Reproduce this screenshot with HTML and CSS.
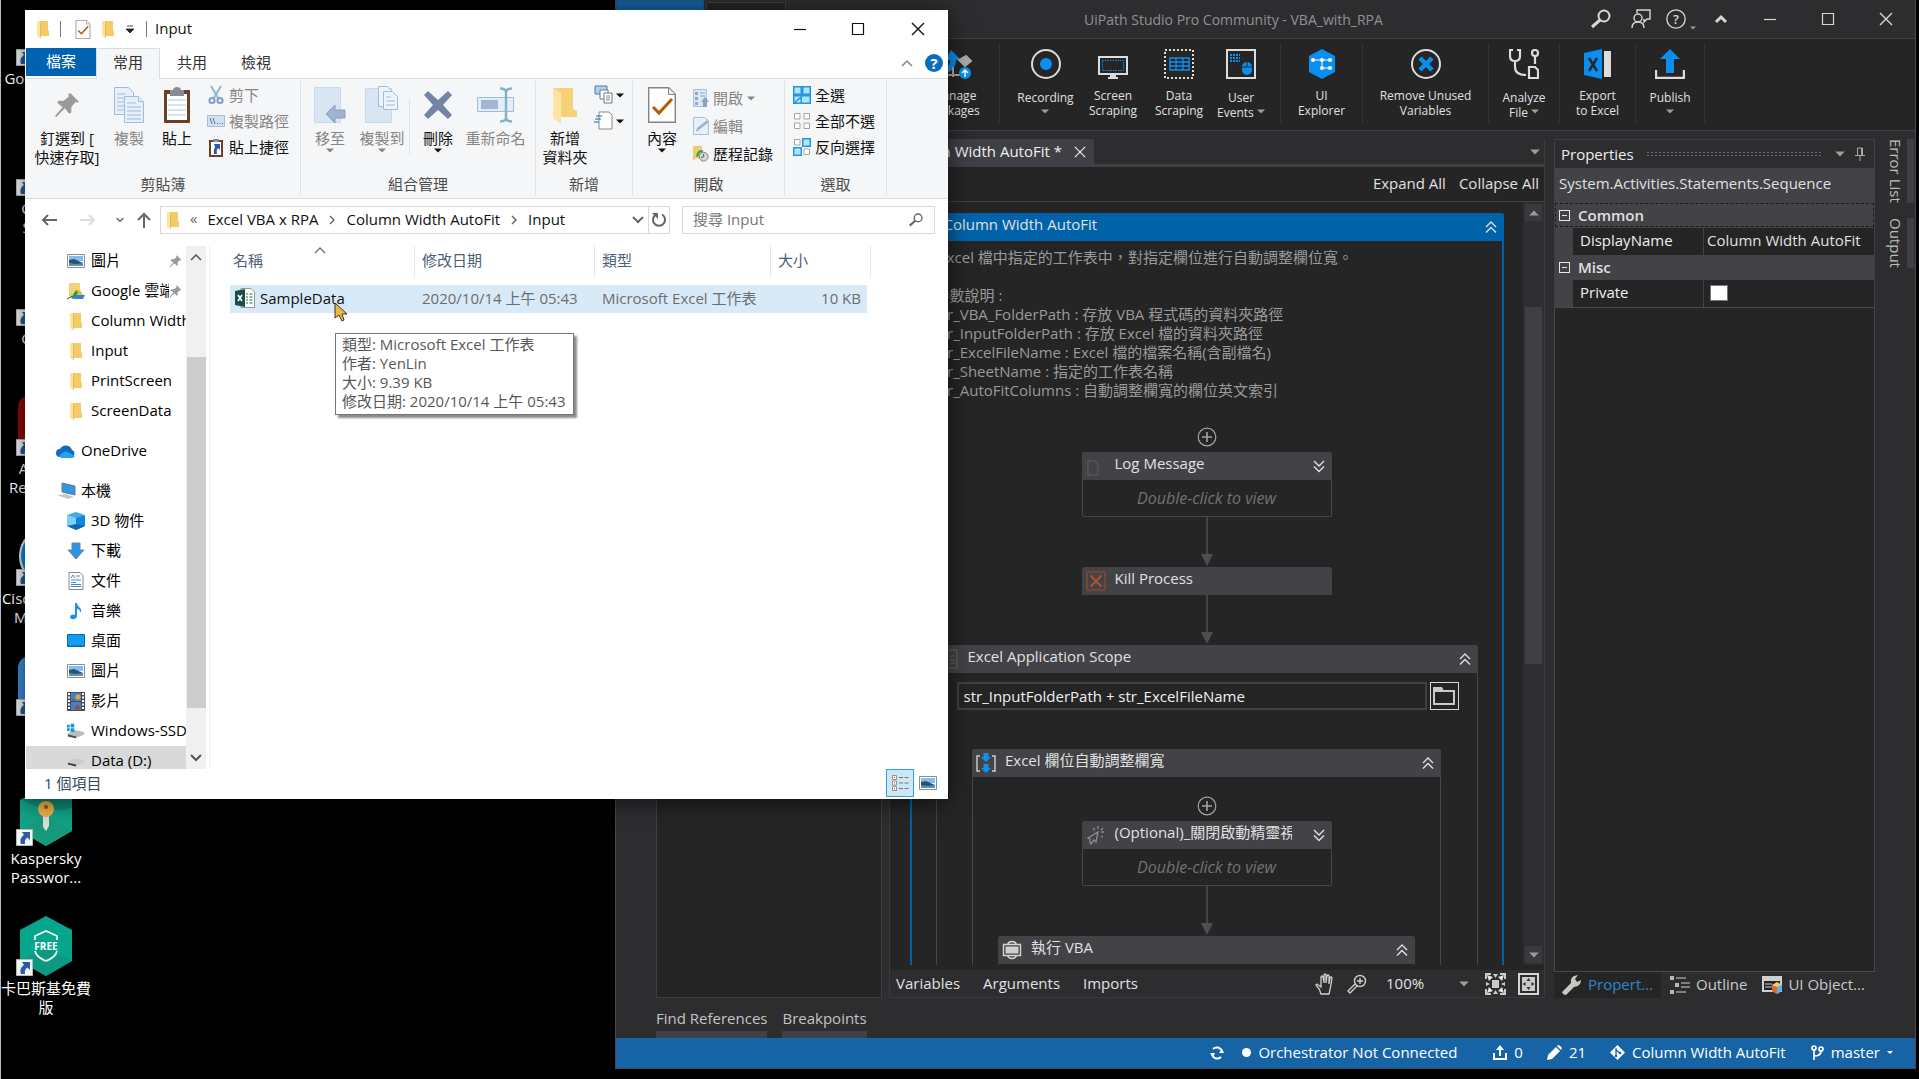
FILE: index.html
```html
<!DOCTYPE html>
<html lang="zh-Hant">
<head>
<meta charset="utf-8">
<title>Input</title>
<link rel="stylesheet" href="styles.css">
</head>
<body>
<svg class="sprite" aria-hidden="true">
  <symbol id="folder" viewBox="0 0 14 18"><path d="M1 1h5v14l-2 3-3-2z" fill="#fbe3a0"/><path d="M4 1h8v9l1 1v5H5l-1 2z" fill="#f4cb68"/><path d="M4 1v17l1-2V4z" fill="#e9b94f"/></symbol>
  <symbol id="pin" viewBox="0 0 24 24"><path d="M15 1l8 8-2 1-1-1-4 5v5l-2 1-4-5-8 8-1-1 7-8-5-4 1-2h5l5-4-1-2z" fill="#9a9a9a"/></symbol>
  <symbol id="checkdoc" viewBox="0 0 28 36"><path d="M.7.7h20l6.600 6.600v28H.7z" fill="#fff" stroke="#848484" stroke-width="1.400"/><path d="M20.500 1v6.500H27" fill="#eee" stroke="#848484"/><path d="M5 20l6 6 13-14" fill="none" stroke="#b35d08" stroke-width="3"/></symbol>
  <symbol id="copy" viewBox="0 0 30 36"><g fill="#e7f0fa" stroke="#9fbcdc"><path d="M.5.5h14l5 5v22H.5z"/><path d="M3 7h9M3 11h13M3 15h13M3 19h13M3 23h13"/><path d="M10.500 9.500h14l5 5v21h-19z"/><path d="M24.500 9.500v5h5M13 16h9M13 20h14M13 24h14M13 28h14M13 32h14"/></g></symbol>
  <symbol id="paste" viewBox="0 0 28 38"><rect x="1" y="4" width="26" height="33" rx="1" fill="#6b4022"/><path d="M4 8h20v26H4z" fill="#fff"/><path d="M5 14h18M5 19h18M5 24h18M5 29h18" stroke="#a9cbe0" stroke-width="1.200"/><path d="M7 4h3c0-4 8-4 8 0h3v6H7z" fill="#858c93"/></symbol>
  <symbol id="scissors" viewBox="0 0 16 20"><path d="M3 1l7 12M13 1L6 13" stroke="#9bb2cd" stroke-width="2" fill="none"/><circle cx="4" cy="15.500" r="2.600" fill="none" stroke="#7f9fc8" stroke-width="2"/><circle cx="12" cy="15.500" r="2.600" fill="none" stroke="#7f9fc8" stroke-width="2"/></symbol>
  <symbol id="copypath" viewBox="0 0 18 12"><path d="M.5.5h17v11H.5z" fill="#d4e1f2" stroke="#a6bcd8"/><path d="M3 3l2 6M6 3l2 6M10 8.500h1M12.500 8.500h1M15 8.500h1" stroke="#54719c" fill="none"/></symbol>
  <symbol id="arrowbadge" viewBox="0 0 17 17"><path d="M.5.5h16v16H.5z" fill="#f4f6f8" stroke="#b8b8b8"/><path d="M6 3h8v8l-2.500-2.500C9 10 8.500 12 9 15H5c-1.500-4 0-7 3-9z" fill="#2a5da4"/></symbol>
  <symbol id="move" viewBox="0 0 32 38"><path d="M.5 1.500h26v35H.5z" fill="#d8e6f4" stroke="#c8daee"/><path d="M31 24v8H21v5l-9-9 9-9v5z" fill="#9fb4cd" stroke="#89a1bf"/></symbol>
  <symbol id="copyto" viewBox="0 0 34 38"><path d="M.5 2.500h26v34H.5z" fill="#d8e6f4" stroke="#c8daee"/><g fill="#edf4fc" stroke="#9fbcdc"><path d="M13.500.5h9l4 4v16h-13z"/><path d="M18.500 5.500h9l5 5v13h-14zM21 11h5M21 15h9M21 19h9"/></g></symbol>
  <symbol id="delete" viewBox="0 0 32 32"><path d="M2 6l4-4 10 9L26 2l4 4-9 10 9 10-4 4-10-9-10 9-4-4 9-10z" fill="#7285a6"/></symbol>
  <symbol id="rename" viewBox="0 0 38 36"><path d="M.5 10.500h36v14H.500z" fill="#e3edf8" stroke="#9fbcdc"/><path d="M4 13h17v9H4z" fill="#a3b5d0"/><path d="M23 1.500q6 0 6 4v25q0 4-6 4M35 1.500q-6 0-6 4v25q0 4 6 4" fill="none" stroke="#84b1cb" stroke-width="2.400"/></symbol>
  <symbol id="bigfolder" viewBox="0 0 24 36"><path d="M0 1h20v21l4 2v6H8v6l-8-5z" fill="#f6d177"/><path d="M0 1l8 5v30l-8-5z" fill="#fce4a4"/></symbol>
  <symbol id="newitem" viewBox="0 0 20 20"><path d="M1 1h12v8H1z" fill="#a7d7f5" stroke="#4c7da5"/><path d="M6 5h8v9H6z" fill="#fff" stroke="#777"/><path d="M10 8h8v10h-8z" fill="#fff" stroke="#777"/><path d="M12 11h4M12 13h4M12 15h4" stroke="#5aa2a2"/></symbol>
  <symbol id="easy" viewBox="0 0 20 20"><path d="M5 1h10l3 3v14H5z" fill="#fff" stroke="#888"/><path d="M2 5h6M1 8h6M0 11h5" stroke="#1b67b0"/></symbol>
  <symbol id="openicon" viewBox="0 0 16 18"><path d="M.5.5h13v17H.5z" fill="#dce9f5" stroke="#a8c0da"/><path d="M2 3h3v3H2zM2 8h3v3H2zM2 13h3v3H2z" fill="#8fa8c8"/><path d="M7 4h5M7 7h5" stroke="#8fa8c8"/><path d="M12 8l4 5h-2v5h-4v-5H8z" fill="#8ba3c3"/></symbol>
  <symbol id="edit" viewBox="0 0 16 18"><path d="M.5.500h11l4 3v14H.5z" fill="#e7f0fa" stroke="#a8c0da"/><path d="M3 15l1-4 10-8 2 2-10 8z" fill="#9fb4d0"/></symbol>
  <symbol id="history" viewBox="0 0 18 18"><path d="M0 0h10v14H3l-3 3z" fill="#f4cb68"/><path d="M5 12a5 5 0 0 1 6-6" stroke="#2f9d6b" stroke-width="2.500" fill="none"/><circle cx="12" cy="12" r="5" fill="#d7d7d7" stroke="#777"/><path d="M12 9v3l-3 1" stroke="#444" fill="none"/></symbol>
  <symbol id="selall" viewBox="0 0 18 18"><path d="M.75.75h7.500v7.500H.75zM9.750.75h7.500v7.500h-7.500zM.75 9.750h7.500v7.500H.75zM9.750 9.750h7.500v7.500H.75z" fill="#b3e2fd" stroke="#2496e0" stroke-width="1.500"/></symbol>
  <symbol id="selnone" viewBox="0 0 18 18"><path d="M1.500 1.500h5.500V7H1.500zM11 1.500h5.500V7H11zM1.500 11H7v5.500H1.500zM11 11h5.500v5.500H11z" fill="#fff" stroke="#a5a5a5"/></symbol>
  <symbol id="selinv" viewBox="0 0 18 18"><path d="M1.500 1.500h5.500V7H1.500zM11 11h5.500v5.500H11z" fill="#fff" stroke="#a5a5a5"/><path d="M9.750.75h7.500v7.500h-7.500zM.75 9.750h7.500v7.500H.75z" fill="#b3e2fd" stroke="#2496e0" stroke-width="1.500"/></symbol>
  <symbol id="caret" viewBox="0 0 8 5"><path d="M0 .5h8l-4 4z" fill="currentColor"/></symbol>
  <symbol id="up" viewBox="0 0 12 8"><path d="M1 7l5-5 5 5" fill="none" stroke="currentColor" stroke-width="1.500"/></symbol>
  <symbol id="down" viewBox="0 0 12 8"><path d="M1 1l5 5 5-5" fill="none" stroke="currentColor" stroke-width="2"/></symbol>
  <symbol id="right" viewBox="0 0 6 10"><path d="M1 1l4 4-4 4" fill="none" stroke="currentColor" stroke-width="1.500"/></symbol>
  <symbol id="larrow" viewBox="0 0 16 12"><path d="M7 1L2 6l5 5M2 6h14" fill="none" stroke="currentColor" stroke-width="2"/></symbol>
  <symbol id="min" viewBox="0 0 14 14"><path d="M1 7.500h12" stroke="currentColor" stroke-width="1.200"/></symbol>
  <symbol id="max" viewBox="0 0 14 14"><path d="M1.500 1.500h11v11h-11z" fill="none" stroke="currentColor" stroke-width="1.200"/></symbol>
  <symbol id="close" viewBox="0 0 14 14"><path d="M1 1l12 12M13 1L1 13" stroke="currentColor" stroke-width="1.400"/></symbol>
  <symbol id="lens" viewBox="0 0 20 20"><circle cx="13" cy="7" r="5.500" fill="none" stroke="currentColor" stroke-width="2"/><path d="M9 11l-8 7" stroke="currentColor" stroke-width="3"/></symbol>
  <symbol id="refresh" viewBox="0 0 16 16"><path d="M11 2.500A6 6 0 1 1 5 2.500" fill="none" stroke="currentColor" stroke-width="2"/><path d="M1 1h6v6z" fill="currentColor"/></symbol>
  <symbol id="picture" viewBox="0 0 18 14"><path d="M.5.500h17v13H.5z" fill="#fff" stroke="#8e8e8e"/><path d="M2 2h14v5H2z" fill="#7cc0f3"/><path d="M2 6l5-1 9 4v1H2z" fill="#34505f"/><path d="M2 9l7 1 7-1v3H2z" fill="#4f94c4"/></symbol>
  <symbol id="gdrive" viewBox="0 0 18 18"><path d="M2 1h11v13H2z" fill="#f6d177"/><path d="M9 8h4l4 7h-4z" fill="#f5b921"/><path d="M9 8l2 3-4 6-3-1z" fill="#1c9c5b"/><path d="M7 17l2-4h9l-2 4z" fill="#3c7be0"/><path d="M0 17l5-3" stroke="#444"/></symbol>
  <symbol id="cloud" viewBox="0 0 20 14"><path d="M4 13a4 4 0 0 1 0-8 6.500 6.500 0 0 1 12 1 3.700 3.700 0 0 1 0 7z" fill="#0f6cbd"/><path d="M3 12q5-6 9-4l7 4q-1 2-3 2H5z" fill="#28a0ec"/></symbol>
  <symbol id="pc" viewBox="0 0 20 18"><path d="M6 1l13 3v9L6 10z" fill="#2f97e3" stroke="#6b7a88"/><path d="M1 13l9-1 8 3-6 2z" fill="#c3c8cc"/></symbol>
  <symbol id="cube" viewBox="0 0 18 18"><path d="M0 3l9 2v13l-9-4z" fill="#7fd0f4"/><path d="M18 3L9 5v13l9-4z" fill="#0c88d6"/><path d="M0 3l9-3 9 3-9 3z" fill="#44a8e6"/><path d="M0 14l9-2 9 2-9 4z" fill="#1166b0"/></symbol>
  <symbol id="download" viewBox="0 0 18 18"><path d="M5 1h8v7h4l-8 9-8-9h4z" fill="#2b95e6" stroke="#6f8398"/></symbol>
  <symbol id="document" viewBox="0 0 16 18"><path d="M1 .5h11l3 3v14H1z" fill="#fff" stroke="#808a92"/><path d="M3 6l2-3 2 3M8 4h4M3 8h10M3 10.500h5M3 12.500h10M3 14.500h10" stroke="#3f8dc0" fill="none"/></symbol>
  <symbol id="music" viewBox="0 0 14 18"><path d="M6 1h2c0 4 5 4 4 9h-1c0-2-1-3-3-3v7c0 4-7 4-7 1 0-2 3-3 5-2z" fill="#1795ea"/></symbol>
  <symbol id="desk" viewBox="0 0 18 14"><path d="M.5.5h17v12H.500z" fill="#159bf0" stroke="#0c6cae"/><path d="M1 12h16" stroke="#0a4c80" stroke-dasharray="2 1"/></symbol>
  <symbol id="video" viewBox="0 0 18 19"><path d="M0 0h18v19H0z" fill="#4a4a4a"/><path d="M2 1v17M16 1v17" stroke="#fff" stroke-width="2" stroke-dasharray="2 1.500"/><path d="M4 1h10v8H4zM4 10h10v8H4z" fill="#3c84cf"/><circle cx="11" cy="5" r="2.500" fill="#e8a92b"/><path d="M7 17l4-5 2 5zM5 7l4 1-4 1z" fill="#c33a24"/></symbol>
  <symbol id="windisk" viewBox="0 0 20 16"><path d="M1 11l7-4 11 2v3l-9 4-9-3z" fill="#b9bdc0"/><path d="M1 12l9 2v2l-9-2z" fill="#444"/><path d="M0 1h3v3H0zM4 0h4v4H4zM0 5h3v3H0zM4 5h4v4H4z" fill="#1197ea"/></symbol>
  <symbol id="disk" viewBox="0 0 20 16"><path d="M1 9l8-4 10 2v3l-9 4-9-3z" fill="#c9cdd0"/><path d="M1 10l9 2v2l-9-2z" fill="#3c3c3c"/></symbol>
  <symbol id="excel" viewBox="0 0 20 20"><path d="M6 .5h10l3.500 3.500v15.500H6z" fill="#fff" stroke="#8e9a94"/><path d="M11 6h2M14.500 6h3M11 9h2M14.500 9h3M11 12h2M14.500 12h3M11 15h2M14.500 15h3" stroke="#6aa186" stroke-width="1.500"/><path d="M0 3l10-2v18L0 17z" fill="#1a4f3f"/><path d="M3 7l4 6M7 7l-4 6" stroke="#fff" stroke-width="1.600"/></symbol>
  <symbol id="details" viewBox="0 0 18 18"><g fill="#fff" stroke="#9a8f80"><path d="M1.500 1.500h4v4h-4zM1.500 7h4v4h-4zM1.500 12.500h4v4h-4z"/></g><path d="M8 3.500h4M13.500 3.500h4M8 9h4M13.500 9h4M8 14.500h4M13.500 14.500h4" stroke="#777"/><path d="M3 3h1v1H3zM3 8.500h1v1H3zM3 14h1v1H3z" fill="#b33"/></symbol>
  <symbol id="dblup" viewBox="0 0 12 14"><path d="M1 7l5-5 5 5M1 12.500l5-5 5 5" fill="none" stroke="currentColor" stroke-width="1.400"/></symbol>
  <symbol id="dbldown" viewBox="0 0 12 14"><path d="M1 2l5 5 5-5M1 7.500l5 5 5-5" fill="none" stroke="currentColor" stroke-width="1.400"/></symbol>
  <symbol id="plus" viewBox="0 0 20 20"><circle cx="10" cy="10" r="8.800" fill="none" stroke="#a3a3a3" stroke-width="1.200"/><path d="M10 5v10M5 10h10" stroke="#a3a3a3" stroke-width="1.600"/></symbol>
  <symbol id="flow" viewBox="0 0 12 50"><path d="M6 0v38" stroke="#434347" stroke-width="2"/><path d="M0 37h12L6 49z" fill="#4d4d52"/></symbol>
</svg>

<main class="desktop">
  <ul class="shortcuts">
    <li><span class="art"><svg class="badge"><use href="#arrowbadge"/></svg></span><span>Google 雲端</span></li>
    <li><span class="art"><svg class="badge"><use href="#arrowbadge"/></svg></span><span>Google<br>Sheets</span></li>
    <li><span class="art"><svg class="badge"><use href="#arrowbadge"/></svg></span><span>Google<br>Docs</span></li>
    <li><span class="art"><svg viewBox="0 0 60 60"><rect x="2" width="56" height="60" rx="10" fill="#8f0b04"/></svg><svg class="badge"><use href="#arrowbadge"/></svg></span><span>Acrobat<br>Reader DC</span></li>
    <li><span class="art"><svg viewBox="0 0 60 60"><circle cx="32" cy="30" r="28" fill="#0d8fdc" stroke="#e8f4fa" stroke-width="2"/></svg><svg class="badge"><use href="#arrowbadge"/></svg></span><span>Cisco Webex<br>Meetings</span></li>
    <li><span class="art"><svg viewBox="0 0 60 60"><rect x="2" width="56" height="60" rx="12" fill="#3f8ce0"/></svg><svg class="badge"><use href="#arrowbadge"/></svg></span><span>Zoom</span></li>
    <li><span class="art"><svg viewBox="0 0 60 60"><path d="M30 0l26 14v31L30 60 4 45V14z" fill="#12a287"/><path d="M4 45l26-14 26 14-26 15z" fill="#189a7c"/><path d="M4 13h52v9q-26 7-52-9z" fill="#0c8e76"/><path d="M27 29h6v11l-3 5-3-4z" fill="#ddd"/><circle cx="30" cy="23" r="8" fill="#f0b04c"/><circle cx="30" cy="21" r="2" fill="#8a5a12"/></svg><svg class="badge"><use href="#arrowbadge"/></svg></span><span>Kaspersky<br>Passwor...</span></li>
    <li><span class="art"><svg viewBox="0 0 60 60"><path d="M30 0l26 14v31L30 60 4 45V14z" fill="#05a68c"/><path d="M4 45l26-14 26 14-26 15z" fill="#0b9a7f"/><path d="M19 24v-4l11-5 11 5v4M19 35q1 6 11 10 10-4 11-10" fill="none" stroke="#fff" stroke-width="1.600"/><text x="30" y="34" text-anchor="middle" class="free">FREE</text></svg><svg class="badge"><use href="#arrowbadge"/></svg></span><span>卡巴斯基免費<br>版</span></li>
  </ul>

  <section class="studio" aria-label="UiPath Studio">
    <header class="studio-title">
      <span class="rtab active"></span><span class="rtab"></span>
      <h1>UiPath Studio Pro Community - VBA_with_RPA</h1>
      <button class="tool" aria-label="Search"><svg width="20" height="20"><use href="#lens"/></svg></button>
      <button class="tool" aria-label="Feedback"><svg width="20" height="20" viewBox="0 0 20 20"><path d="M6 4V1h13v9h-3l-3 3v-3M1 19q0-6 6-6t6 6" fill="none" stroke="currentColor" stroke-width="1.400"/><circle cx="7" cy="9" r="4" fill="none" stroke="currentColor" stroke-width="1.400"/></svg></button>
      <button class="tool help" aria-label="Help"><svg width="20" height="20" viewBox="0 0 20 20"><circle cx="10" cy="10" r="9.200" fill="none" stroke="currentColor" stroke-width="1.300"/><text x="10" y="15" text-anchor="middle" class="qmark">?</text></svg><svg class="grey low" width="6" height="4"><use href="#caret"/></svg></button>
      <button class="tool" aria-label="Collapse ribbon"><svg width="14" height="10" viewBox="0 0 14 10"><path d="M2 8l5-5 5 5" fill="none" stroke="currentColor" stroke-width="3"/></svg></button>
      <button class="win" aria-label="Minimize"><svg width="14" height="14"><use href="#min"/></svg></button>
      <button class="win" aria-label="Maximize"><svg width="14" height="14"><use href="#max"/></svg></button>
      <button class="win" aria-label="Close"><svg width="14" height="14"><use href="#close"/></svg></button>
    </header>

    <nav class="studio-ribbon">
      <div class="sg packages"><button><svg width="46" height="30" viewBox="4 0 46 30"><path d="M24 1l10 10h-5q0 8-7 12l-4-3q5-3 5-9h-5z" fill="#0a8ff0"/><path d="M32 11l7-4 5 5-6 5zM10 26h24M26 18v10" stroke="#aaa" stroke-width="2" fill="#aaa"/><circle cx="38" cy="24" r="6" fill="#0a8ff0"/><path d="M38 28v-7M35 24l3-3 3 3" stroke="#fff" stroke-width="1.500" fill="none"/></svg><span>Manage<br>Packages</span></button></div>
      <div class="sg capture">
        <button><svg width="30" height="30" viewBox="0 0 30 30"><circle cx="15" cy="15" r="14" fill="none" stroke="#dcdcdc" stroke-width="2"/><circle cx="15" cy="15" r="6" fill="#0a8ff0"/></svg><span class="dd">Recording<br><svg class="grey" width="8" height="5"><use href="#caret"/></svg></span></button>
        <button><svg width="30" height="30" viewBox="0 0 30 30"><path d="M1 8h28v17H1z" fill="none" stroke="#dcdcdc" stroke-width="2"/><path d="M12 26h6v2h2v2H10v-2h2z" fill="#dcdcdc"/><path d="M4.500 11.500h21v10h-21z" fill="none" stroke="#0a8ff0" stroke-dasharray="1.500 1"/></svg><span>Screen<br>Scraping</span></button>
        <button><svg width="30" height="30" viewBox="0 0 30 30"><path d="M1 1h28v28H1z" fill="none" stroke="#dcdcdc" stroke-width="2" stroke-dasharray="2 2"/><path d="M6 9h19v12H6zM6 13h19M6 17h19M12 9v12M19 9v12" fill="none" stroke="#0a8ff0" stroke-width="1.500"/></svg><span>Data<br>Scraping</span></button>
        <button><svg width="30" height="30" viewBox="0 0 30 30"><path d="M1 1h28v28H1z" fill="none" stroke="#dcdcdc" stroke-width="2"/><path d="M4 6h10M4 9h10M4 12h10" stroke="#0a8ff0" stroke-width="2" stroke-dasharray="2 1"/><rect x="16" y="13" width="10" height="13" rx="5" fill="#0a8ff0"/><path d="M16 18h10M21 13v5" stroke="#252526"/></svg><span class="dd">User<br>Events <svg class="grey" width="8" height="5"><use href="#caret"/></svg></span></button>
      </div>
      <div class="sg w82"><button><svg width="30" height="30" viewBox="0 0 30 30"><path d="M15 0l13 7v16l-13 7L2 23V7z" fill="#0a8ff0"/><path d="M6 11h17M15 11v8h8" stroke="#fff" fill="none"/><g fill="#fff"><circle cx="6" cy="11" r="2"/><circle cx="15" cy="11" r="2"/><circle cx="23" cy="11" r="2"/><circle cx="15" cy="19" r="2"/><circle cx="23" cy="19" r="2"/></g></svg><span>UI<br>Explorer</span></button></div>
      <div class="sg w126"><button><svg width="30" height="30" viewBox="0 0 30 30"><circle cx="15" cy="15" r="14" fill="none" stroke="#dcdcdc" stroke-width="2"/><path d="M9 9l12 12M21 9L9 21" stroke="#0a8ff0" stroke-width="4.500"/></svg><span>Remove Unused<br>Variables</span></button></div>
      <div class="sg w71"><button><svg width="30" height="30" viewBox="0 0 30 30"><g fill="none" stroke="#dcdcdc" stroke-width="2.200"><path d="M4 1H1v6q0 5 5 5t5-5V1H8M6 12v6q0 8 11 8"/><circle cx="26" cy="4" r="3"/><path d="M26 7v8M20 18h6l3 3v8h-9z"/></g></svg><span class="dd">Analyze<br>File <svg class="grey" width="8" height="5"><use href="#caret"/></svg></span></button></div>
      <div class="sg w76"><button><svg width="30" height="30" viewBox="0 0 30 30"><path d="M22 2h7v26h-7z" fill="#dcdcdc"/><path d="M2 4l18-4v30L2 26z" fill="#0a8ff0"/><path d="M7 9l8 13M15 9L7 22" stroke="#252526" stroke-width="2.400"/></svg><span>Export<br>to Excel</span></button></div>
      <div class="sg w69"><button><svg width="30" height="30" viewBox="0 0 30 30"><path d="M15 0l10 10h-6v14h-8V10H5z" fill="#0a8ff0"/><path d="M1 21v8h28v-8" fill="none" stroke="#dcdcdc" stroke-width="2.400"/></svg><span class="dd">Publish<br><svg class="grey" width="8" height="5"><use href="#caret"/></svg></span></button></div>
    </nav>

    <div class="work">
      <aside class="left-panel"></aside>

      <section class="designer">
        <div class="doc-tabs">
          <button class="doc-tab">Column Width AutoFit * <svg width="12" height="12"><use href="#close"/></svg></button>
          <svg class="grey" width="10" height="6"><use href="#caret"/></svg>
        </div>
        <div class="doc-tools"><button>Expand All</button><button>Collapse All</button></div>
        <div class="canvas-row">
          <div class="canvas">
            <article class="act root">
              <header><span class="t">Column Width AutoFit</span><svg width="12" height="14"><use href="#dblup"/></svg></header>
              <p class="note">&nbsp;Excel 檔中指定的工作表中，對指定欄位進行自動調整欄位寬。<br><br>參數說明 :<br>str_VBA_FolderPath : 存放 VBA 程式碼的資料夾路徑<br>str_InputFolderPath : 存放 Excel 檔的資料夾路徑<br>str_ExcelFileName : Excel 檔的檔案名稱(含副檔名)<br>str_SheetName : 指定的工作表名稱<br>str_AutoFitColumns : 自動調整欄寬的欄位英文索引</p>
              <svg class="plus" width="20" height="20"><use href="#plus"/></svg>
              <article class="act leaf">
                <header><svg width="20" height="20" viewBox="0 0 20 20"><path d="M2 5h7l3 3v11H2z" fill="none" stroke="#5e5e60"/></svg><span class="t">Log Message</span><svg width="12" height="14"><use href="#dbldown"/></svg></header>
                <p class="hint">Double-click to view</p>
              </article>
              <svg class="flow" width="12" height="50"><use href="#flow"/></svg>
              <article class="act leaf bare">
                <header><svg width="20" height="20" viewBox="0 0 20 20"><path d="M1 1h18v18H1z" fill="none" stroke="#a04f20"/><path d="M4.500 4.500l11 11M15.500 4.500l-11 11" stroke="#b2532f" stroke-width="2"/></svg><span class="t">Kill Process</span></header>
              </article>
              <svg class="flow" width="12" height="50"><use href="#flow"/></svg>
              <article class="act scope">
                <header><svg width="20" height="20" viewBox="0 0 20 20"><path d="M1 1h18v18H1zM12 7h5M12 11h5M12 14h5" fill="none" stroke="#68686c"/></svg><span class="t">Excel Application Scope</span><svg width="12" height="14"><use href="#dblup"/></svg></header>
                <div class="path"><input type="text" aria-label="Workbook path" value="str_InputFolderPath + str_ExcelFileName"><button aria-label="Browse"><svg width="22" height="18" viewBox="0 0 22 18"><path d="M1 17V4h20v13z" fill="none" stroke="#c8cbc8" stroke-width="2"/><path d="M0 0h9l2 4H0z" fill="#c8cbc8"/></svg></button></div>
                <article class="act inner">
                  <header><svg width="20" height="20" viewBox="0 0 20 20"><path d="M4 3H1v15h3M16 3h3v15h-3" fill="none" stroke="#d0d0d0" stroke-width="1.400"/><path d="M7.500 0h5v4H15l-5 5-5-5h2.500zM7.500 11h5v4H15l-5 5-5-5h2.500z" fill="#1190ee"/></svg><span class="t">Excel 欄位自動調整欄寬</span><svg width="12" height="14"><use href="#dblup"/></svg></header>
                  <svg class="plus" width="20" height="20"><use href="#plus"/></svg>
                  <article class="act leaf">
                    <header><svg width="20" height="20" viewBox="0 0 20 20"><path d="M4 17v-3l-2-1 10-6-2 10-2-2-3 4zM12 1v3M7 3l2 2M17 3l-2 2M15 7h3M15 11l2 1" fill="none" stroke="#8c8c8e" stroke-width="1.300"/></svg><span class="t">(Optional)_關閉啟動精靈視窗</span><svg width="12" height="14"><use href="#dbldown"/></svg></header>
                    <p class="hint">Double-click to view</p>
                  </article>
                  <svg class="flow" width="12" height="50"><use href="#flow"/></svg>
                  <article class="act vba">
                    <header><svg width="20" height="20" viewBox="0 0 20 20"><path d="M3.500 6.500h13v7h-13z" fill="#cfcfcf"/><path d="M1.500 4.500h4q1-3 4.500-3t4.500 3h4v11h-4q-1 3-4.500 3t-4.500-3h-4zM5 4.500h10M5 15.500h10" fill="none" stroke="#d5d5d5" stroke-width="1.400"/></svg><span class="t">執行 VBA</span><svg width="12" height="14"><use href="#dblup"/></svg></header>
                  </article>
                </article>
              </article>
            </article>
          </div>
          <div class="vscroll"><i><svg class="grey flip" width="10" height="6"><use href="#caret"/></svg></i><b></b><i><svg class="grey" width="10" height="6"><use href="#caret"/></svg></i></div>
        </div>
        <footer class="doc-foot">
          <button>Variables</button><button>Arguments</button><button>Imports</button>
          <span class="grow"></span>
          <button aria-label="Pan"><svg width="20" height="22" viewBox="0 0 20 22"><path d="M6 21q-1-5-5-9l1-1 4 3V4q1-2 2 0l1 6V2q1-2 2 0v8l1-7q1-2 2 0v8l1-6q1-2 2 0-1 8-3 16z" fill="none" stroke="#d0d0d0" stroke-width="1.300"/></svg></button>
          <button aria-label="Zoom"><svg width="20" height="20" viewBox="0 0 20 20"><circle cx="13" cy="7" r="5.500" fill="none" stroke="#d0d0d0" stroke-width="1.400"/><path d="M13 4v6M10 7h6M8 10l-7 7 2 2 7-7" stroke="#d0d0d0" fill="none" stroke-width="1.400"/></svg></button>
          <span class="zoom"><select aria-label="Zoom level"><option>100%</option></select><svg class="grey" width="10" height="6"><use href="#caret"/></svg></span>
          <button aria-label="Fit to screen"><svg width="21" height="22" viewBox="0 0 21 22"><path d="M1 6V1h5M15 1h5v5M20 16v5h-5M6 21H1v-5" fill="none" stroke="#c9cbc9" stroke-width="2"/><path d="M7 7h7v8H7z" fill="#c9cbc9"/><path d="M2 2l6 2-4 4zM19 2l-6 2 4 4zM2 20l6-2-4-4zM19 20l-6-2 4-4z" fill="#e2e4e2"/><path d="M8 1l2.500 4L13 1zM8 21l2.500-4 2.500 4zM1 9l4 2-4 2zM20 9l-4 2 4 2z" fill="#c9cbc9"/></svg></button>
          <button aria-label="Overview"><svg width="21" height="22" viewBox="0 0 21 22"><path d="M1 1h19v20H1z" fill="#2d2d30" stroke="#d6d6d6" stroke-width="2"/><path d="M4 4h13v14H4z" fill="#c9cbc9"/><path d="M10.500 5l2 3h-4zM10.500 17l2-3h-4zM4.500 11l3-2v4zM16.500 11l-3-2v4z" fill="#2d2d30"/></svg></button>
        </footer>
      </section>

      <section class="props">
        <header class="props-title"><h2>Properties</h2><span class="grip"></span><svg class="grey" width="10" height="6"><use href="#caret"/></svg><svg width="10" height="14" viewBox="0 0 10 14"><path d="M2.500 8V1h5v7M0 8.500h10M5 9v5M6.500 1v7" fill="none" stroke="#a8a8a8"/></svg></header>
        <p class="type">System.Activities.Statements.Sequence</p>
        <div class="grid">
          <div class="cat focus"><i class="tog"></i><b>Common</b></div>
          <div class="prop"><label for="dn">DisplayName</label><input id="dn" type="text" value="Column Width AutoFit"></div>
          <div class="cat"><i class="tog"></i><b>Misc</b></div>
          <div class="prop last"><label for="pv">Private</label><span class="cell"><input id="pv" type="checkbox"></span></div>
        </div>
        <div class="props-rest"></div>
        <nav class="ptabs">
          <button class="on"><svg width="20" height="20" viewBox="0 0 20 20"><path d="M1 17L10 8q-1-5 3-7l4-1-3 4 2 3 4-2q0 6-7 7l-8 8q-3 0-4-3z" fill="#c5c8bd"/></svg>Propert...</button>
          <button><svg width="20" height="18" viewBox="0 0 20 18"><path d="M0 0h4v4H0zM5 7h4v4H5zM0 14h4v4H0z" fill="#b9bba5"/><path d="M6 2h10M11 7h9M11 11h9M6 16h10" stroke="#9a9a9a" stroke-width="1.500"/></svg>Outline</button>
          <button><svg width="20" height="18" viewBox="0 0 20 18"><path d="M0 0h20v16H0z" fill="#cfcfcf"/><path d="M2 5h16v9H2z" fill="#252526"/><path d="M3 8h7M3 11h7" stroke="#cfcfcf"/><path d="M10 9l5-2 5 2v6l-5 3-5-3z" fill="#5cb2ec"/><path d="M10 9l5 2v7l-5-3z" fill="#e2652a"/><path d="M10 9l5-3 5 3-5 2z" fill="#f6c667"/></svg>UI Object...</button>
        </nav>
      </section>

      <aside class="side-tabs"><button>Error List</button><button>Output</button></aside>
    </div>

    <nav class="bottom-tabs"><button>Find References</button><button>Breakpoints</button></nav>

    <footer class="status">
      <span class="sync"><svg width="14" height="14" viewBox="0 0 14 14"><path d="M2 9a5.500 5.500 0 0 0 9 2M12 5a5.500 5.500 0 0 0-9-2" fill="none" stroke="#fff" stroke-width="2"/><path d="M0 7h5l-2 4zM9 7h5l-2-4z" fill="#fff"/></svg></span>
      <span class="conn"><i class="dot"></i>Orchestrator Not Connected</span>
      <span class="up"><svg width="14" height="15" viewBox="0 0 14 15"><path d="M1 8v6h12V8" fill="none" stroke="#fff" stroke-width="2"/><path d="M7 0l4 5H8v6H6V5H3z" fill="#fff"/></svg>0</span>
      <span class="edits"><svg width="15" height="15" viewBox="0 0 15 15"><path d="M0 15l1-5 8-8 4 4-8 8zM10 1l1-1q2 0 4 3l-1 2z" fill="#fff"/></svg>21</span>
      <span class="repo"><svg width="15" height="15" viewBox="0 0 15 15"><path d="M7.500 0L15 7.500 7.500 15 0 7.500z" fill="#fff"/><path d="M6 3v8M6 5l4 3" stroke="#1664a5" stroke-width="1.300"/><circle cx="6" cy="11" r="1.300" fill="#1664a5"/><circle cx="10" cy="8" r="1.300" fill="#1664a5"/></svg>Column Width AutoFit</span>
      <span class="branch"><svg width="13" height="15" viewBox="0 0 13 15"><g fill="none" stroke="#fff" stroke-width="1.700"><circle cx="3" cy="3" r="2"/><circle cx="10" cy="4" r="2"/><path d="M3 5v10M3 11q7 0 7-5"/></g></svg>master <svg width="6" height="5"><use href="#caret"/></svg></span>
    </footer>
  </section>

  <section class="explorer" aria-label="Input">
    <header class="ex-title">
      <svg width="14" height="18"><use href="#folder"/></svg><i class="bar b1"></i>
      <svg width="16" height="19"><use href="#checkdoc"/></svg><svg class="f2" width="14" height="18"><use href="#folder"/></svg>
      <svg class="qa" width="8" height="8" viewBox="0 0 8 8"><path d="M1 1h6M0 4h8L4 8z" fill="#222" stroke="#222" stroke-width=".8"/></svg><i class="bar"></i>
      <h2>Input</h2>
      <button aria-label="Minimize"><svg width="14" height="14"><use href="#min"/></svg></button>
      <button aria-label="Maximize"><svg width="14" height="14"><use href="#max"/></svg></button>
      <button aria-label="Close"><svg width="14" height="14"><use href="#close"/></svg></button>
    </header>
    <nav class="ex-tabs">
      <button class="file">檔案</button><button class="on">常用</button><button>共用</button><button>檢視</button>
      <span class="grow"></span>
      <svg class="mid" width="12" height="8"><use href="#up"/></svg><button class="q" aria-label="說明">?</button>
    </nav>
    <div class="ribbon">
      <div class="group g1"><div class="items">
        <button class="big"><svg width="26" height="26"><use href="#pin"/></svg><span>釘選到 [<br>快速存取]</span></button>
        <button class="big dim"><svg width="30" height="36"><use href="#copy"/></svg><span>複製</span></button>
        <button class="big"><svg width="28" height="38"><use href="#paste"/></svg><span>貼上</span></button>
        <div class="stack"><button class="dim"><svg width="18" height="20"><use href="#scissors"/></svg>剪下</button><button class="dim"><svg width="18" height="12"><use href="#copypath"/></svg>複製路徑</button><button><svg width="18" height="19" viewBox="0 0 18 19"><path d="M2 2h14v17H2z" fill="#6b4022"/><path d="M4 4h10v13H4z" fill="#fff"/><path d="M6 1h6v3H6z" fill="#858c93"/><path d="M7 6h6v6l-2-2q-2 2-1 6H7q-1-4 1-7z" fill="#2a5da4"/></svg>貼上捷徑</button></div>
      </div><h3>剪貼簿</h3></div>
      <div class="group g2"><div class="items">
        <button class="big dim"><svg width="32" height="38"><use href="#move"/></svg><span>移至</span><svg class="c" width="8" height="5"><use href="#caret"/></svg></button>
        <button class="big dim"><svg width="34" height="38"><use href="#copyto"/></svg><span>複製到</span><svg class="c" width="8" height="5"><use href="#caret"/></svg></button>
        <i class="split"></i>
        <button class="big"><svg width="32" height="32"><use href="#delete"/></svg><span>刪除</span><svg class="c" width="8" height="5"><use href="#caret"/></svg></button>
        <button class="big dim"><svg width="38" height="36"><use href="#rename"/></svg><span>重新命名</span></button>
      </div><h3>組合管理</h3></div>
      <div class="group g3"><div class="items">
        <button class="big"><svg width="24" height="36"><use href="#bigfolder"/></svg><span>新增<br>資料夾</span></button>
        <div class="stack"><button aria-label="新增項目"><svg width="20" height="20"><use href="#newitem"/></svg><svg width="8" height="5"><use href="#caret"/></svg></button><button aria-label="輕鬆存取"><svg width="20" height="20"><use href="#easy"/></svg><svg width="8" height="5"><use href="#caret"/></svg></button></div>
      </div><h3>新增</h3></div>
      <div class="group g4"><div class="items">
        <button class="big"><svg width="28" height="36"><use href="#checkdoc"/></svg><span>內容</span><svg class="c" width="8" height="5"><use href="#caret"/></svg></button>
        <div class="stack"><button class="dim"><svg width="16" height="18"><use href="#openicon"/></svg>開啟<svg width="8" height="5"><use href="#caret"/></svg></button><button class="dim"><svg width="16" height="18"><use href="#edit"/></svg>編輯</button><button><svg width="16" height="18"><use href="#history"/></svg>歷程記錄</button></div>
      </div><h3>開啟</h3></div>
      <div class="group g5"><div class="items">
        <div class="stack"><button><svg width="18" height="18"><use href="#selall"/></svg>全選</button><button><svg width="18" height="18"><use href="#selnone"/></svg>全部不選</button><button><svg width="18" height="18"><use href="#selinv"/></svg>反向選擇</button></div>
      </div><h3>選取</h3></div>
    </div>
    <div class="address">
      <button aria-label="上一頁"><svg width="16" height="12"><use href="#larrow"/></svg></button>
      <button class="off" aria-label="下一頁"><svg class="mirror" width="16" height="12"><use href="#larrow"/></svg></button>
      <button class="narrow" aria-label="最近的位置"><svg width="8" height="6"><use href="#down"/></svg></button>
      <button class="upb" aria-label="上移"><svg width="14" height="16" viewBox="0 0 14 16"><path d="M1 8l6-6 6 6M7 2v14" fill="none" stroke="currentColor" stroke-width="2"/></svg></button>
      <div class="crumbs"><svg width="14" height="18"><use href="#folder"/></svg><span class="laquo">«</span><a href="#">Excel VBA x RPA</a><svg width="6" height="10"><use href="#right"/></svg><a href="#">Column Width AutoFit</a><svg width="6" height="10"><use href="#right"/></svg><a href="#">Input</a><span class="grow"></span><svg width="12" height="8"><use href="#down"/></svg><button class="re" aria-label="重新整理"><svg width="16" height="16"><use href="#refresh"/></svg></button></div>
      <div class="search"><input type="text" aria-label="搜尋" placeholder="搜尋 Input"><svg width="14" height="14"><use href="#lens"/></svg></div>
    </div>
    <div class="panes">
      <nav class="tree">
        <a href="#"><svg width="18" height="14"><use href="#picture"/></svg><span>圖片</span><svg class="p" width="13" height="13"><use href="#pin"/></svg></a>
        <a href="#"><svg width="18" height="18"><use href="#gdrive"/></svg><span>Google 雲端硬碟</span><svg class="p" width="13" height="13"><use href="#pin"/></svg></a>
        <a href="#"><svg width="18" height="18"><use href="#folder"/></svg><span>Column Width AutoFit</span></a>
        <a href="#"><svg width="18" height="18"><use href="#folder"/></svg><span>Input</span></a>
        <a href="#"><svg width="18" height="18"><use href="#folder"/></svg><span>PrintScreen</span></a>
        <a href="#"><svg width="18" height="18"><use href="#folder"/></svg><span>ScreenData</span></a>
        <a href="#" class="top"><svg width="20" height="14"><use href="#cloud"/></svg><span>OneDrive</span></a>
        <a href="#" class="top"><svg width="20" height="18"><use href="#pc"/></svg><span>本機</span></a>
        <a href="#"><svg width="18" height="18"><use href="#cube"/></svg><span>3D 物件</span></a>
        <a href="#"><svg width="18" height="18"><use href="#download"/></svg><span>下載</span></a>
        <a href="#"><svg width="18" height="18"><use href="#document"/></svg><span>文件</span></a>
        <a href="#"><svg width="18" height="18"><use href="#music"/></svg><span>音樂</span></a>
        <a href="#"><svg width="18" height="14"><use href="#desk"/></svg><span>桌面</span></a>
        <a href="#"><svg width="18" height="14"><use href="#picture"/></svg><span>圖片</span></a>
        <a href="#"><svg width="18" height="19"><use href="#video"/></svg><span>影片</span></a>
        <a href="#"><svg width="18" height="16"><use href="#windisk"/></svg><span>Windows-SSD (C:)</span></a>
        <a href="#" class="sel"><svg width="18" height="16"><use href="#disk"/></svg><span>Data (D:)</span></a>
      </nav>
      <div class="tree-scroll"><svg width="12" height="8"><use href="#up"/></svg><b></b><svg width="12" height="8"><use href="#down"/></svg></div>
      <div class="files">
        <table>
          <colgroup><col class="c1"><col class="c2"><col class="c3"><col class="c4"></colgroup>
          <thead><tr><th>名稱<svg class="sort" width="12" height="8"><use href="#up"/></svg></th><th>修改日期</th><th>類型</th><th>大小</th></tr></thead>
          <tbody><tr><td><span class="fname"><svg width="20" height="20"><use href="#excel"/></svg>SampleData</span></td><td>2020/10/14 上午 05:43</td><td>Microsoft Excel 工作表</td><td>10 KB</td></tr></tbody>
        </table>
      </div>
    </div>
    <footer class="ex-status"><span>1 個項目</span><span class="grow"></span><button class="on" aria-label="詳細資料"><svg width="18" height="18"><use href="#details"/></svg></button><button aria-label="大圖示"><svg width="18" height="14"><use href="#picture"/></svg></button></footer>
    <svg class="cursor" width="14" height="20" viewBox="0 0 14 20"><path d="M1 1v15l4-3 3 6 2-1-2-6h5z" fill="#f0b93e" stroke="#333"/></svg>
    <div class="tip" role="tooltip">類型: Microsoft Excel 工作表<br>作者: YenLin<br>大小: 9.39 KB<br>修改日期: 2020/10/14 上午 05:43</div>
  </section>
</main>
</body>
</html>
```
FILE: styles.css
```css
* { box-sizing: border-box; }
html, body { height: 100%; margin: 0; }
body { background: #000; font-family: "Open Sans", "Noto Sans CJK TC", sans-serif; font-size: 15px; line-height: 19px; overflow: hidden; }
h1, h2, h3, p, ul { margin: 0; padding: 0; font-size: inherit; font-weight: 400; }
button, input, select { font: inherit; color: inherit; background: none; border: 0; padding: 0; margin: 0; white-space: nowrap; }
a { color: inherit; text-decoration: none; white-space: nowrap; }
svg { display: block; flex: none; }
.sprite { position: absolute; width: 0; height: 0; }
.grow { flex: 1; }
.grey { color: #9c9c9c; }
.desktop { position: relative; height: 100%; overflow: hidden; border-left: 1px solid #b9bcbc; }

/* desktop shortcuts */
.shortcuts { width: 90px; padding-top: 6px; list-style: none; color: #fff; text-align: center; }
.shortcuts li { height: 130px; display: flex; flex-direction: column; align-items: center; gap: 3px; white-space: nowrap; }
.shortcuts .art { position: relative; width: 60px; height: 60px; flex: none; }
.shortcuts .badge { position: absolute; left: 0; bottom: 0; width: 17px; height: 17px; }
.free { font: 700 10px "Open Sans", sans-serif; fill: #fff; }

/* studio window */
.studio { position: absolute; left: 614px; right: 3px; top: 0; bottom: 10px; display: flex; flex-direction: column; background: #2d2d30; color: #e0e0e0; border: 1px solid #48484c; border-top: 0; }
.studio-title { height: 39px; display: flex; border-bottom: 1px solid #3f3f46; color: #d8d8d0; }
.rtab { width: 80px; height: 30px; margin: 2px 0 0 2px; border: 1px solid #3f3f46; background: #252526; }
.rtab.active { width: 88px; margin: 0; background: #165f9f; border-color: #1b5488; }
.studio-title h1 { flex: 1; padding-left: 100px; text-align: center; font-size: 14px; line-height: 39px; color: #919194; white-space: nowrap; }
.tool, .win { display: flex; align-items: center; justify-content: center; }
.tool { width: 40px; }
.tool.help { gap: 4px; padding-left: 5px; justify-content: flex-start; }
.low { margin-top: 18px; }
.qmark { font: 600 13px "Open Sans", sans-serif; fill: #d8d8d0; }
.win { width: 58px; }

.studio-ribbon { height: 92px; display: flex; padding: 5px 0 7px 300px; background: #252526; border-bottom: 1px solid #3f3f46; font-size: 12px; line-height: 15px; }
.sg { border-right: 1px solid #343437; display: flex; justify-content: center; }
.sg button { display: flex; flex-direction: column; align-items: center; gap: 9px; padding-top: 5px; }
.sg .dd { padding-top: 2px; }
.sg .dd svg { display: inline-block; vertical-align: 3px; }
.packages { width: 84px; padding-right: 7px; }
.capture { width: 281px; display: grid; grid-template-columns: 67px 68px 64px 60px; justify-content: start; padding-left: 12px; }
.w82 { width: 82px; } .w126 { width: 126px; } .w71 { width: 71px; } .w76 { width: 76px; } .w69 { width: 69px; }

.work { flex: 1; min-height: 0; display: grid; grid-template-columns: 226px minmax(0, 1fr) 321px 40px; padding: 8px 0 0 40px; }
.left-panel { border: 1px solid #3f3f46; background: #252526; }

.designer { margin: 0 9px 0 7px; display: flex; flex-direction: column; min-height: 0; border: 1px solid #3a3a3e; border-top: 0; }
.doc-tabs { height: 28px; display: flex; align-items: center; justify-content: space-between; padding-right: 4px; border-bottom: 3px solid #3f3f46; }
.doc-tab { height: 25px; width: 204px; display: flex; align-items: center; justify-content: flex-end; gap: 12px; padding-right: 8px; background: #3f3f46; color: #f0f0f0; }
.doc-tools { height: 35px; display: flex; align-items: center; justify-content: flex-end; gap: 13px; padding: 0 5px 2px 0; background: #252526; border-bottom: 1px solid #3f3f46; }
.canvas-row { flex: 1; min-height: 0; display: flex; background: #252526; padding-bottom: 5px; }
.canvas { flex: 1; min-width: 0; overflow: hidden; padding-top: 11px; display: flex; flex-direction: column; align-items: center; }
.vscroll { width: 21px; background: #2f2f33; display: flex; flex-direction: column; align-items: center; padding: 2px 0; }
.vscroll i { width: 17px; height: 17px; background: #3a3a3e; display: flex; align-items: center; justify-content: center; flex: none; }
.vscroll b { width: 17px; height: 47%; margin: 86px 0 auto; background: #3f3f46; }
.flip { transform: scaleY(-1); }

.act { display: flex; flex-direction: column; align-items: center; flex: none; border: 1px solid #46464a; border-top: 0; border-radius: 3px 3px 2px 2px; }
.act > header { align-self: stretch; margin: 0 -1px; height: 28px; flex: none; display: flex; align-items: center; gap: 9px; padding: 0 7px 0 4px; background: #434347; border-radius: 3px 3px 0 0; }
.act .t { flex: 1; white-space: nowrap; overflow: hidden; padding-bottom: 5px; }
.root { width: 594px; height: 900px; border: 2px solid #0063a9; border-top: 0; }
.root > header { background: #0063a9; margin: 0 -2px; padding-left: 34px; }
.note { align-self: stretch; padding: 7px 0 0 23px; color: #9a9a9a; white-space: nowrap; }
.root > .plus { margin: 27px 0 5px; }
.plus, .flow { flex: none; }
.leaf { width: 250px; }
.bare { border: 0; }
.bare > header { margin: 0; }
.leaf .t { margin-right: 12px; }
.hint { height: 36px; padding-top: 9px; font-size: 16px; font-style: italic; color: #727276; }
.scope { width: 542px; height: 500px; }
.scope > header { padding-left: 2px; gap: 10px; }
.path { display: flex; align-self: stretch; height: 28px; margin: 9px 18px 39px 20px; gap: 3px; }
.path input { flex: 1; min-width: 0; border: 2px solid #3f3f46; padding: 0 5px; color: #f0f0f0; }
.path button { width: 29px; border: 1px solid #d5d8d5; display: flex; align-items: center; justify-content: center; }
.inner { width: 469px; height: 300px; }
.inner > .plus { margin: 19px 0 5px; }
.vba { width: 417px; height: 80px; }

.doc-foot { height: 27px; display: flex; align-items: center; padding: 0 5px 0 6px; gap: 23px; }
.doc-foot button:nth-of-type(n+4) { margin-left: -11px; }
.zoom { position: relative; width: 83px; margin: 0 4px 0 -4px; display: flex; align-items: center; }
.zoom select { width: 100%; appearance: none; }
.zoom svg { position: absolute; right: 0; pointer-events: none; }

.props { display: flex; flex-direction: column; min-height: 0; }
.props-title { height: 29px; display: flex; align-items: center; padding: 0 9px 0 6px; gap: 12px; border: 1px solid #3f3f46; border-bottom: 0; color: #eee; }
.props-title > svg + svg { margin-left: -2px; }
.grip { flex: 1; height: 6px; background: radial-gradient(circle, #69696c 1px, transparent 1px) 0 0 / 4px 3px; }
.type { height: 34px; line-height: 31px; padding-left: 5px; background: #434347; }
.grid { border: 1px solid #3f3f46; border-top: 0; border-bottom: 0; background: #434347; }
.cat { height: 26px; display: flex; align-items: center; gap: 8px; padding-left: 4px; }
.cat b { font-weight: 600; }
.focus { margin: 1px 0; border: 1px dashed #19191a; padding-left: 3px; height: 24px; }
.tog { width: 11px; height: 11px; border: 1px solid #e6e6e6; background: linear-gradient(#e6e6e6, #e6e6e6) center / 5px 1px no-repeat; }
.prop { display: grid; grid-template-columns: 130px 1fr; gap: 1px; height: 26px; margin-left: 18px; line-height: 25px; }
.prop > * { background: #252526; padding: 0 3px 2px; min-width: 0; }
.prop label { padding-left: 7px; color: #f0f0f0; }
.last { margin-bottom: 1px; }
.cell { display: flex; align-items: center; padding-left: 6px; }
.cell input { appearance: none; width: 18px; height: 16px; background: #fff; border: 1px solid #777; }
.props-rest { flex: 1; border: 1px solid #48484c; background: #252526; }
.ptabs { height: 26px; display: flex; gap: 9px; color: #c9c9c9; }
.ptabs button { display: flex; align-items: center; gap: 6px; padding-bottom: 1px; }
.ptabs button + button + button { margin-left: 6px; }
.ptabs .on { width: 107px; padding-left: 7px; gap: 7px; background: #252526; color: #2f86d0; }

.side-tabs { display: flex; flex-direction: column; align-items: flex-end; gap: 15px; padding-right: 1px; }
.side-tabs button { writing-mode: vertical-rl; border-right: 7px solid #3f3f46; padding-right: 2px; color: #bdbdbd; }

.bottom-tabs { height: 40px; display: flex; gap: 15px; padding: 11px 0 0 40px; color: #c4c4c4; }
.bottom-tabs button { height: 29px; border-bottom: 7px solid #3f3f46; display: flex; }
.status { height: 30px; flex: none; display: flex; align-items: center; justify-content: flex-end; background: #1664a5; color: #fff; padding: 0 22px 1px 0; white-space: nowrap; }
.status span { display: flex; align-items: center; gap: 7px; }
.sync { margin-right: 18px; }
.dot { width: 9px; height: 9px; border-radius: 50%; background: #fff; }
.conn { margin-right: 36px; }
.up, .edits { margin-right: 24px; }
.repo { margin-right: 25px; }

/* explorer window */
.explorer { position: absolute; left: 24px; top: 10px; right: 971px; bottom: 280px; display: flex; flex-direction: column; background: #fff; color: #111; box-shadow: 0 3px 22px rgba(0, 0, 0, .6); }
.explorer button { cursor: default; }
.ex-title { height: 38px; flex: none; display: flex; align-items: center; padding-left: 11px; }
.ex-title h2 { flex: 1; padding-left: 8px; padding-bottom: 2px; }
.ex-title button { width: 58px; height: 100%; display: flex; align-items: center; justify-content: center; padding-bottom: 1px; }
.ex-title button:last-child { width: 61px; }
.bar { width: 1px; height: 16px; background: #777; }
.b1 { margin: 0 14px 0 10px; }
.f2 { margin-left: 10px; }
.qa { margin: 0 12px 0 11px; }
.ex-tabs { height: 30px; flex: none; display: flex; align-items: center; padding: 0 5px 0 1px; }
.ex-tabs > button { width: 64px; height: 30px; padding-bottom: 2px; color: #333; }
.ex-tabs .file { width: 70px; height: 28px; align-self: flex-start; background: #0063b1; color: #fff; }
.ex-tabs .on { position: relative; height: 31px; border: 1px solid #dadbdc; border-bottom: 0; background: #f5f6f7; z-index: 1; }
.ex-tabs .mid { color: #888; margin-right: 12px; }
.ex-tabs .q { width: 18px; height: 18px; padding: 0; border-radius: 50%; background: #0a6ebd; color: #fff; font-weight: 700; line-height: 18px; }
.ribbon { height: 121px; flex: none; display: flex; background: #f5f6f7; border-top: 1px solid #dadbdc; border-bottom: 1px solid #dadbdc; padding: 2px 0 3px 1px; }
.group { border-right: 1px solid #dfe1e3; display: flex; flex-direction: column; }
.items { flex: 1; display: flex; }
.group h3 { height: 20px; line-height: 19px; text-align: center; color: #4c4c4c; }
.g1 { width: 275px; } .g2 { width: 235px; } .g3 { width: 97px; } .g4 { width: 152px; } .g5 { width: 102px; }
.big { display: flex; flex-direction: column; align-items: center; height: 84px; }
.big > svg:first-child { height: 48px; padding: 5px 0; }
.dim { color: #858585; }
.g1 .big { width: 48px; } .g1 .big:first-child { width: 76px; margin-left: 3px; }
.g2 { padding: 0 4px; } .g2 .big { width: 50px; } .g2 .big:nth-child(2) { width: 54px; } .g2 .big:last-child { width: 65px; }
.split { width: 1px; height: 55px; margin: 18px 3px 0 0; background: #dfe1e3; }
.g3 .big { width: 58px; } .g4 .big { width: 58px; }
.stack { display: flex; flex-direction: column; padding-top: 1px; }
.stack button { height: 26px; display: flex; align-items: center; gap: 4px; }
.g1 .stack { padding-left: 6px; }
.g3 .stack button { gap: 2px; }
.g4 .stack { padding: 3px 0 0 2px; }
.g4 .stack button { height: 28px; }
.g5 .stack { padding-left: 8px; }
.address { height: 42px; flex: none; display: flex; align-items: center; padding: 0 13px 0 4px; color: #666; }
.address > button { width: 39px; display: flex; justify-content: center; }
.address > .narrow { width: 25px; }
.address > .upb { width: 24px; margin-right: 4px; }
.address .off { color: #ddd; }
.mirror { transform: scaleX(-1); }
.crumbs { flex: 1; height: 28px; display: flex; align-items: center; border: 1px solid #d9d9d9; padding-left: 5px; }
.crumbs a { color: #111; padding-bottom: 1px; }
.crumbs a + svg { margin: 0 11px; }
.laquo { margin: 0 10px 3px; }
.re { width: 21px; height: 26px; margin-left: 4px; border-left: 1px solid #d9d9d9; display: flex; align-items: center; justify-content: center; }
.search { width: 253px; height: 28px; margin-left: 12px; display: flex; align-items: center; border: 1px solid #d9d9d9; padding: 0 11px 0 10px; }
.search input { flex: 1; min-width: 0; padding-bottom: 1px; }
.search input::placeholder { color: #767676; opacity: 1; }

.panes { flex: 1; min-height: 0; display: flex; padding-top: 5px; }
.tree { width: 161px; overflow: hidden; padding-left: 1px; }
.tree a { height: 30px; display: flex; align-items: center; gap: 6px; padding-left: 41px; color: #000; }
.tree span { flex: 1; overflow: hidden; padding-bottom: 2px; }
.tree .p { margin: 0 4px 0 -6px; }
.tree .top { margin: 10px 0; padding-left: 30px; gap: 5px; }
.tree .top + .top { margin: 10px 0 0; }
.tree .top:has(+ .top) { margin-bottom: 0; }
.tree .sel { background: #d9d9d9; }
.tree-scroll { width: 20px; background: #f0f0f0; display: flex; flex-direction: column; align-items: center; padding: 7px 0; color: #555; }
.tree-scroll b { width: 19px; height: 69%; margin: 96px 0 auto; background: #cdcdcd; }
.files { flex: 1; margin-left: 3px; padding-left: 20px; border-left: 1px solid #f0f0f0; }
.files table { width: 641px; table-layout: fixed; border-spacing: 0; }
.c1 { width: 185px; } .c2 { width: 180px; } .c3 { width: 176px; } .c4 { width: 100px; }
.files th { position: relative; height: 31px; padding: 0 0 2px 7px; text-align: left; font-weight: 400; color: #4c607a; border-right: 1px solid #e5e5e5; }
.files th:first-child { padding-left: 3px; }
.files tbody::before { content: ""; display: block; height: 8px; }
.files td { height: 28px; padding: 0 0 2px 7px; background: #d8e9f8; color: #6d6d6d; white-space: nowrap; }
.files td:first-child { padding-left: 5px; color: #111; }
.files td:last-child { text-align: right; padding-right: 6px; border-right: 4px solid #fff; }
.fname { display: flex; align-items: center; gap: 5px; }
.sort { position: absolute; left: 84px; top: 0; color: #777; }
.ex-status { height: 30px; flex: none; display: flex; align-items: center; padding: 0 6px 2px 19px; color: #33475b; }
.ex-status button { width: 28px; height: 28px; display: flex; align-items: center; justify-content: center; }
.ex-status .on { background: #cce8f6; border: 1px solid #3a9fe0; }
.cursor { position: absolute; left: 309px; top: 292px; }
.tip { position: absolute; left: 310px; top: 323px; padding: 1px 7px 3px 6px; border: 1px solid #767676; background: #fff; color: #575757; white-space: nowrap; box-shadow: 3px 3px 2px rgba(0, 0, 0, .45); }
```
